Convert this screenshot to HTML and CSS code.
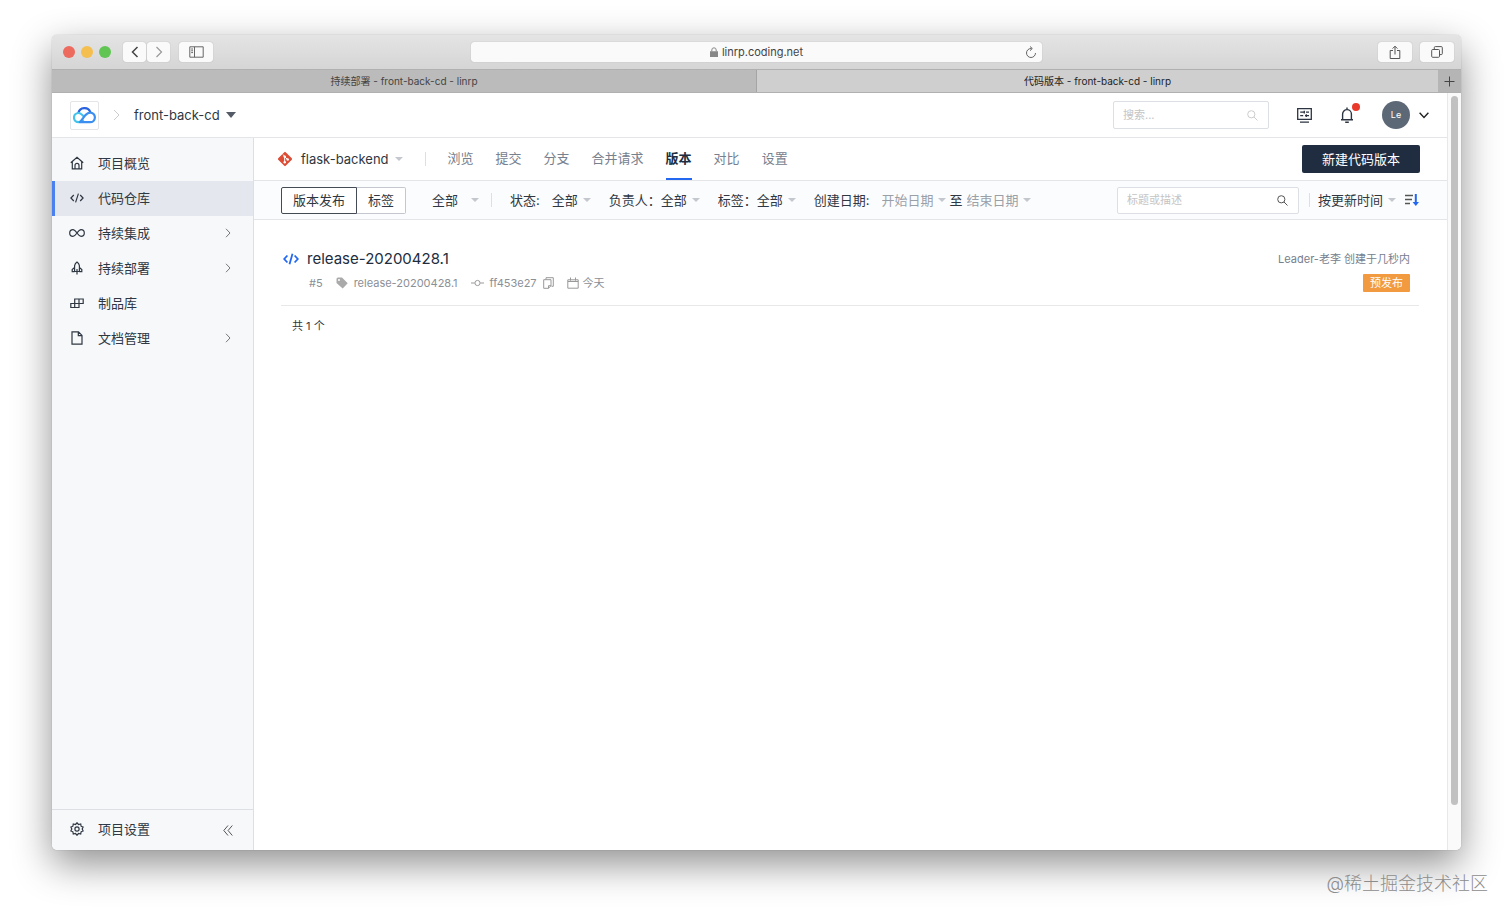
FILE: index.html
```html
<!DOCTYPE html>
<html lang="zh-CN">
  <head>
    <meta charset="UTF-8" />
    <meta name="viewport" content="width=device-width, initial-scale=1.0" />
    <title>代码版本 - front-back-cd - linrp</title>
    <link rel="stylesheet" href="styles.css">
  </head>
  <body>
    <div class="window">
      <div class="toolbar">
        <div class="toolbar-left">
          <div class="lights">
            <span class="red"></span>
            <span class="yellow"></span>
            <span class="green"></span>
          </div>
          <div class="history">
            <button class="tool small" aria-label="后退">
              <svg width="8" height="12" viewBox="0 0 8 12"><path d="M6.5 1 1.5 6l5 5" stroke="#444" stroke-width="1.5" /></svg>
            </button>
            <button class="tool small" aria-label="前进">
              <svg width="8" height="12" viewBox="0 0 8 12"><path d="m1.5 1 5 5-5 5" stroke="#999" stroke-width="1.2" /></svg>
            </button>
          </div>
          <button class="tool" aria-label="边栏">
            <svg width="15" height="12" viewBox="0 0 15 12"><path d="M.8.8h13.4v10.4H.8zM5.5.8v10.4M2.2 3h1.8M2.2 4.8h1.8M2.2 6.6h1.8" stroke="#666" /></svg>
          </button>
        </div>
        <div class="address">
          <svg width="8" height="10" viewBox="0 0 8 10"><path d="M0 4.2h8V10H0z" fill="#888" /><path d="M1.8 4.5V3a2.2 2.2 0 0 1 4.4 0v1.5" stroke="#888" /></svg>
          <span>linrp.coding.net</span>
          <button class="reload" aria-label="重新载入">
            <svg width="12" height="13" viewBox="0 0 12 13"><path d="M6.5 2.5H6a4.500 4.500 0 1 0 4.500 4.500M5 .5l2.300 2L5 4.700" stroke="#666" /></svg>
          </button>
        </div>
        <div class="toolbar-right">
          <button class="tool" aria-label="共享">
            <svg width="12" height="15" viewBox="0 0 12 15"><path d="M4 5.5H1.2v8h9.6v-8H8M6 9.5V1.3M3.6 3.6 6 1.2l2.4 2.4" stroke="#555" /></svg>
          </button>
          <button class="tool" aria-label="所有标签页">
            <svg width="12" height="12" viewBox="0 0 12 12"><rect x=".7" y="3.5" width="7.8" height="7.8" rx="1" stroke="#555" /><path d="M3.3 3.3V1.6q0-1 1-1h6q1 0 1 1v6q0 1-1 1H8.6" stroke="#555" /></svg>
          </button>
        </div>
      </div>

      <div class="tabs">
        <div class="tab">持续部署 - front-back-cd - linrp</div>
        <div class="tab active">
          <span>代码版本 - front-back-cd - linrp</span>
          <button aria-label="新标签页">
            <svg width="11" height="11" viewBox="0 0 11 11"><path d="M5.5.5v10M.5 5.5h10" stroke="#444" /></svg>
          </button>
        </div>
      </div>

      <div class="viewport">
        <div class="page">
          <header>
            <a class="logo" href="#" aria-label="CODING">
              <svg width="23" height="18" viewBox="0 0 23 18">
                <path d="M5.3 7.2A6.3 6.3 0 0 1 17.4 6.4" stroke="#2862e0" stroke-width="2.2" />
                <path d="M11.2 11.2C9 8.3 7.6 7 5.6 7a4.6 4.6 0 0 0 0 9.2c2 0 3.3-1 4.9-2.6" stroke="#43c3ee" stroke-width="2.2" />
                <path d="M7 16.2h10a4.8 4.8 0 0 0 .2-9.6c-2 0-3.2.9-4.800 2.500z" stroke="#3c8ff0" stroke-width="2.2" stroke-linejoin="round" />
              </svg>
            </a>
            <svg class="crumb" width="7" height="12" viewBox="0 0 7 12"><path d="m1 1 5 5-5 5" stroke="#ccc" /></svg>
            <button class="project">front-back-cd <i class="caret dark"></i></button>
            <div class="header-right">
              <label class="search">
                <input type="text" placeholder="搜索..." aria-label="搜索" />
                <svg width="11" height="11" viewBox="0 0 11 11"><circle cx="4.3" cy="4.3" r="3.6" stroke="#ccc" /><path d="m7 7 3.5 3.5" stroke="#ccc" /></svg>
              </label>
              <button class="icon" aria-label="工作台">
                <svg width="15" height="15" viewBox="0 0 15 15"><path d="M.7.7h13.6v10.6H.7zM3 14.2h9M3.2 4.2h4.3M9 4.2h3M3.2 7.6h3M8 7.6h4M7.3 2.8v2.8M9.3 6.2v2.9" stroke="#2b3440" stroke-width="1.3" /></svg>
              </button>
              <button class="icon bell" aria-label="通知">
                <svg width="14" height="16" viewBox="0 0 14 16"><path d="M1 12.8h12M2.6 12.6V7a4.4 4.4 0 0 1 8.8 0v5.6M7 2.4V.6M5.2 15.2h3.6" stroke="#2b3440" stroke-width="1.4" /></svg>
              </button>
              <button class="account">
                <span class="avatar">Le</span>
                <svg width="10" height="7" viewBox="0 0 10 7"><path d="m.6.8 4.4 4.6L9.4.8" stroke="#222" stroke-width="1.4" /></svg>
              </button>
            </div>
          </header>

          <div class="body">
            <aside>
              <nav class="menu">
                <a href="#">
                  <svg width="14" height="14" viewBox="0 0 14 14"><path d="M.8 6.8 7 1.3l6.2 5.5M2.3 5.8v7h9.4v-7M5 12.8V9.4a2 2 0 0 1 4 0v3.4" /></svg>
                  项目概览
                </a>
                <a href="#" class="active">
                  <svg width="14" height="14" viewBox="0 0 14 14"><path d="M3.8 4 .9 7l2.9 3M10.2 4l2.9 3-2.9 3M8.4 2.6 5.6 11.4" /></svg>
                  代码仓库
                </a>
                <a href="#">
                  <svg width="16" height="14" viewBox="0 0 16 14"><path d="M8 7C6.500 5 5.500 3.700 4 3.700a3.300 3.300 0 0 0 0 6.600c1.500 0 2.500-1.300 4-3.300s2.500-3.300 4-3.300a3.300 3.300 0 0 1 0 6.600c-1.500 0-2.500-1.300-4-3.300z" /></svg>
                  持续集成
                  <svg class="more" width="6" height="10" viewBox="0 0 6 10"><path d="m1 .8 4 4.200-4 4.200" /></svg>
                </a>
                <a href="#">
                  <svg width="14" height="14" viewBox="0 0 14 14"><path d="M4.600 10.500V4.600Q5 2.300 7 1q2 1.300 2.400 3.600v5.900zM4.600 6.500 2.200 8.600v2h2.400M9.400 6.500l2.400 2.100v2H9.400M7 8v5.400" /></svg>
                  持续部署
                  <svg class="more" width="6" height="10" viewBox="0 0 6 10"><path d="m1 .8 4 4.200-4 4.200" /></svg>
                </a>
                <a href="#">
                  <svg width="14" height="14" viewBox="0 0 14 14"><path d="M4.700 3h8.500v4.500H4.700zM9 3v8.500M.8 7.500H9v4H.8zM4.700 7.500v4" /></svg>
                  制品库
                </a>
                <a href="#">
                  <svg width="14" height="14" viewBox="0 0 14 14"><path d="M2 .9h6.500L12 4.400v8.700H2zM8.300.9v3.700H12" /></svg>
                  文档管理
                  <svg class="more" width="6" height="10" viewBox="0 0 6 10"><path d="m1 .8 4 4.200-4 4.200" /></svg>
                </a>
              </nav>
              <div class="settings">
                <a href="#">
                  <svg width="14" height="14" viewBox="0 0 14 14"><path d="m5.500 2.500 1.500-1.700 1.500 1.700 2.200-.5.4 2.200 2 .9L12.200 7l.9 1.900-2 .9-.4 2.200-2.200-.5L7 13.200l-1.500-1.700-2.200.5-.4-2.200-2-.9L1.800 7l-.9-1.900 2-.9.4-2.200z" /><circle cx="7" cy="7" r="2.100" /></svg>
                  项目设置
                </a>
                <button aria-label="收起">
                  <svg width="10" height="11" viewBox="0 0 10 11"><path d="M5 .5.800 5.500l4.200 5M9.300.5 5.100 5.500l4.200 5" stroke="#555" /></svg>
                </button>
              </div>
            </aside>

            <main>
              <div class="repo-bar">
                <svg width="16" height="16" viewBox="0 0 16 16"><rect x="2.700" y="2.700" width="10.600" height="10.600" rx="1" transform="rotate(45 8 8)" fill="#dd4c35" /><path d="M6 3.500 7.700 5.500v6M7.700 5.800l3 2.700" stroke="#fff" stroke-width="1" /><circle cx="7.700" cy="11.300" r="1.200" fill="#fff" /><circle cx="10.700" cy="8.500" r="1.200" fill="#fff" /><circle cx="7.700" cy="5.600" r="1.200" fill="#fff" /></svg>
                <button class="repo">flask-backend <i class="caret"></i></button>
                <span class="divider"></span>
                <nav>
                  <a href="#">浏览</a>
                  <a href="#">提交</a>
                  <a href="#">分支</a>
                  <a href="#">合并请求</a>
                  <a href="#" class="active">版本</a>
                  <a href="#">对比</a>
                  <a href="#">设置</a>
                </nav>
                <button class="primary">新建代码版本</button>
              </div>

              <div class="filters">
                <div class="segment">
                  <button class="active">版本发布</button>
                  <button>标签</button>
                </div>
                <div class="drop wide">
                  <select aria-label="范围"><option>全部</option></select>
                  <i class="caret"></i>
                </div>
                <span class="divider"></span>
                <div class="drop">
                  <label for="state" class="spaced">状态:</label>
                  <select id="state"><option>全部</option></select>
                  <i class="caret"></i>
                </div>
                <div class="drop">
                  <label for="owner">负责人：</label>
                  <select id="owner"><option>全部</option></select>
                  <i class="caret"></i>
                </div>
                <div class="drop">
                  <label for="tag">标签：</label>
                  <select id="tag"><option>全部</option></select>
                  <i class="caret"></i>
                </div>
                <div class="drop">
                  <label for="start" class="spaced">创建日期:</label>
                  <input id="start" type="text" placeholder="开始日期" />
                  <i class="caret"></i>
                  <label for="end" class="to">至</label>
                  <input id="end" type="text" placeholder="结束日期" />
                  <i class="caret"></i>
                </div>
                <div class="filters-right">
                  <label class="search">
                    <input type="text" placeholder="标题或描述" aria-label="标题或描述" />
                    <svg width="11" height="11" viewBox="0 0 11 11"><circle cx="4.300" cy="4.300" r="3.600" stroke="#555" /><path d="m7 7 3.500 3.500" stroke="#555" /></svg>
                  </label>
                  <span class="divider"></span>
                  <div class="drop">
                    <select aria-label="排序"><option>按更新时间</option></select>
                    <i class="caret"></i>
                  </div>
                  <button class="sort" aria-label="降序">
                    <svg width="16" height="14" viewBox="0 0 16 14"><path d="M1 2.500h8M1 6.500h7M1 10.500h5" stroke="#555" stroke-width="1.300" /><path d="M11.800 1v10" stroke="#2468f2" stroke-width="2" /><path d="M8.600 9h6.400l-3.200 4z" fill="#2468f2" /></svg>
                  </button>
                </div>
              </div>

              <div class="releases">
                <article>
                  <svg class="code" width="16" height="14" viewBox="0 0 16 14"><path d="M4.400 3.500 1.200 7l3.200 3.500M11.600 3.500 14.800 7l-3.200 3.500M9.500 1.800 6.500 12.200" stroke="#2468f2" stroke-width="1.800" /></svg>
                  <div class="info">
                    <h3><a href="#">release-20200428.1</a></h3>
                    <div class="meta">
                      <span>#5</span>
                      <span class="ref">
                        <svg width="12" height="12" viewBox="0 0 12 12"><path fill-rule="evenodd" d="M.5 2q0-1.500 1.500-1.500h4L11.700 6.200 6.700 11.500.500 6zM3 2a1 1 0 1 0 0 2 1 1 0 0 0 0-2z" fill="#aaa" /></svg>
                        release-20200428.1
                      </span>
                      <span class="ref">
                        <svg width="13" height="8" viewBox="0 0 13 8"><circle cx="6.500" cy="4" r="2.600" stroke="#999" /><path d="M0 4h3.700M9.300 4H13" stroke="#999" /></svg>
                        ff453e27
                        <button aria-label="复制">
                          <svg width="11" height="12" viewBox="0 0 11 12"><path d="M3 2.500V.7h7.300v8.600H8.500M.7 2.700H8v6L5.500 11.300H.7zM8 8.700H5.500v2.600" stroke="#999" /></svg>
                        </button>
                      </span>
                      <span class="ref date">
                        <svg width="12" height="12" viewBox="0 0 12 12"><path d="M.8 2.800h10.400v8.400H.8zM3.500.5v3.200M8.500.5v3.200M.8 4.500h10.400" stroke="#999" /></svg>
                        今天
                      </span>
                    </div>
                  </div>
                  <div class="state">
                    <span>Leader-老李 创建于几秒内</span>
                    <span class="badge">预发布</span>
                  </div>
                </article>
                <p class="total">共 1 个</p>
              </div>
            </main>
          </div>
        </div>
        <div class="scrollbar"></div>
      </div>
    </div>
    <div class="watermark">@稀土掘金技术社区</div>
  </body>
</html>
```
FILE: styles.css
```css
:root {
  --text: #2f3742;
  --muted: #76808e;
  --line: #e3e5e8;
  --blue: #2468f2;
}
* {
  box-sizing: border-box;
}
body {
  margin: 0;
  min-height: 100vh;
  padding: 35px 51px 68px 52px;
  display: flex;
  position: relative;
  background: #fff;
  color: var(--text);
  font: 13px/20px Inter, "Noto Sans CJK SC", sans-serif;
}
svg {
  display: block;
  fill: none;
  flex: none;
}
a {
  color: inherit;
  text-decoration: none;
}
button, input, select {
  font: inherit;
  color: inherit;
  border: 0;
  padding: 0;
  margin: 0;
  background: none;
  outline: none;
  appearance: none;
}
input::placeholder {
  color: #c4c4c4;
  opacity: 1;
}

.window {
  flex: 1;
  min-width: 0;
  display: flex;
  flex-direction: column;
  border-radius: 5px;
  overflow: hidden;
  background: #fff;
  box-shadow: 0 0 1px rgba(0, 0, 0, 0.4), 0 14px 38px rgba(0, 0, 0, 0.44);
}

/* browser */
.toolbar {
  height: 34px;
  padding: 0 7px;
  display: grid;
  grid-template-columns: 1fr minmax(0, 571px) 1fr;
  align-items: center;
  background: linear-gradient(#e4e4e4, #d5d5d5);
}
.toolbar-left, .toolbar-right, .lights, .history {
  display: flex;
  align-items: center;
}
.toolbar-left {
  gap: 9px;
}
.toolbar-right {
  justify-content: flex-end;
  gap: 8px;
}
.lights {
  gap: 6px;
  margin: 0 3px 0 4px;
  span {
    width: 12px;
    height: 12px;
    border-radius: 50%;
  }
  .red { background: #ec6a5e; }
  .yellow { background: #f4bf4f; }
  .green { background: #61c554; }
}
.history {
  gap: 1px;
}
.tool {
  width: 34px;
  height: 20px;
  display: grid;
  place-content: center;
  border-radius: 3px;
  background: #fafafa;
  box-shadow: 0 0 1px rgba(0, 0, 0, 0.3);
}
.tool.small {
  width: 23px;
}
.address {
  height: 20px;
  position: relative;
  display: flex;
  justify-content: center;
  align-items: center;
  gap: 4px;
  border-radius: 3px;
  background: #fafafa;
  color: #444;
  font-size: 11px;
  box-shadow: 0 0 1px rgba(0, 0, 0, 0.3);
}
.reload {
  position: absolute;
  right: 5px;
}
.tabs {
  height: 24px;
  display: flex;
  border-top: 1px solid #b0b0b0;
  border-bottom: 1px solid #b0b0b0;
  font-size: 10px;
}
.tab {
  flex: 1;
  display: flex;
  justify-content: center;
  align-items: center;
  background: #bbb;
  color: #444;
}
.tab.active {
  border-left: 1px solid #a5a5a5;
  background: #cfcfcf;
  color: #222;
  span {
    flex: 1;
    text-align: center;
  }
  button {
    width: 23px;
    align-self: stretch;
    display: grid;
    place-content: center;
    background: #b5b5b5;
  }
}
.viewport {
  flex: 1;
  display: flex;
}
.page {
  flex: 1;
  min-width: 0;
  display: flex;
  flex-direction: column;
}
.scrollbar {
  width: 14px;
  padding: 3px 3px 45px;
  background: #fafafa;
  border-left: 1px solid #e8e8e8;
  display: flex;
}
.scrollbar::before {
  content: "";
  width: 7px;
  border-radius: 4px;
  background: #c1c1c1;
}

/* header */
header {
  height: 45px;
  padding: 0 18px;
  display: flex;
  align-items: center;
  border-bottom: 1px solid var(--line);
}
.logo {
  width: 29px;
  height: 29px;
  display: grid;
  place-content: center;
  border: 1px solid var(--line);
  border-radius: 2px;
}
.crumb {
  margin: 0 14px;
}
.project, .repo {
  display: flex;
  align-items: center;
  gap: 6px;
}
.caret {
  flex: none;
  border: 4px solid transparent;
  border-top-color: #c4c8ce;
  border-bottom: 0;
}
.caret.dark {
  border-width: 6px 5px 0;
  border-top-color: #555b66;
}
.header-right {
  margin-left: auto;
  display: flex;
  align-items: center;
  gap: 28px;
}
.search {
  width: 156px;
  height: 28px;
  padding: 0 10px 0 9px;
  display: flex;
  align-items: center;
  border: 1px solid #dcdfe3;
  border-radius: 2px;
  background: #fff;
  font-size: 11px;
  input {
    flex: 1;
    min-width: 0;
  }
}
.bell {
  position: relative;
}
.bell::after {
  content: "";
  position: absolute;
  top: -4px;
  right: -6px;
  width: 8px;
  height: 8px;
  border-radius: 50%;
  background: #e8392b;
}
.account {
  display: flex;
  align-items: center;
  gap: 9px;
}
.avatar {
  width: 28px;
  height: 28px;
  border-radius: 50%;
  background: #5d6876;
  color: #fff;
  font-size: 9px;
  line-height: 28px;
}

/* sidebar */
.body {
  flex: 1;
  display: flex;
}
aside {
  width: 202px;
  flex: none;
  display: flex;
  flex-direction: column;
  border-right: 1px solid #dcdfe4;
  background: #f6f8fa;
  a {
    display: flex;
    align-items: center;
    padding-bottom: 2px;
  }
  a > svg {
    stroke: var(--text);
    stroke-width: 1.2;
  }
  a > svg:first-child {
    width: 16px;
    margin-right: 13px;
  }
}
.menu {
  flex: 1;
  padding-top: 8px;
  a {
    height: 35px;
    padding: 0 22px 2px 14px;
    border-left: 3px solid transparent;
  }
  a.active {
    border-color: #4a80f0;
    background: #e4e8ee;
  }
  a > .more {
    margin-left: auto;
    stroke: #777;
    stroke-width: 1;
  }
}
.settings {
  height: 41px;
  padding: 0 20px 0 17px;
  display: flex;
  justify-content: space-between;
  align-items: center;
  border-top: 1px solid #dcdfe4;
}

/* content */
main {
  flex: 1;
  min-width: 0;
}
.divider {
  width: 1px;
  height: 14px;
  background: #dcdfe3;
}
.repo-bar {
  height: 43px;
  padding: 0 27px 0 23px;
  display: flex;
  align-items: center;
  border-bottom: 1px solid var(--line);
  .divider {
    margin: 0 22px;
  }
  nav {
    align-self: stretch;
    display: flex;
    gap: 22px;
    color: var(--muted);
  }
  nav a {
    line-height: 40px;
    border-bottom: 2px solid transparent;
  }
  nav a.active {
    color: #202d40;
    font-weight: 700;
    border-color: var(--blue);
  }
}
.repo {
  margin-left: 8px;
}
.primary {
  width: 118px;
  height: 28px;
  margin-left: auto;
  border-radius: 2px;
  background: #202d40;
  color: #fff;
}
.filters {
  height: 39px;
  padding: 0 27px;
  display: flex;
  align-items: center;
  white-space: nowrap;
  border-bottom: 1px solid var(--line);
  background: #fbfcfd;
  > .divider {
    margin-left: 12px;
  }
  select {
    height: 20px;
  }
}
.segment {
  display: flex;
  button {
    height: 27px;
    padding: 0 11px;
    border: 1px solid #c4c8ce;
    border-left: 0;
    border-radius: 0 2px 2px 0;
    background: #fff;
  }
  button.active {
    border: 1px solid #444b55;
    border-radius: 2px 0 0 2px;
  }
}
.drop {
  margin-left: 18px;
  display: flex;
  align-items: center;
  .spaced {
    margin-right: 12px;
  }
  .caret {
    margin-left: 4px;
  }
  .to {
    margin: 0 4px;
  }
  input {
    width: 52px;
  }
  input::placeholder {
    color: #9aa0a8;
  }
}
.drop.wide {
  margin-left: 26px;
  .caret {
    margin-left: 12px;
  }
}
.filters-right {
  margin-left: auto;
  display: flex;
  align-items: center;
  .search {
    width: 182px;
    height: 27px;
  }
  .divider {
    margin-left: 10px;
  }
  .drop {
    margin: 0 8px;
  }
}
.releases {
  padding: 27px 28px 0 27px;
}
article {
  padding: 0 9px 10px 2px;
  display: flex;
  border-bottom: 1px solid #e8e8e8;
}
.code {
  margin: 5px 8px 0 0;
}
h3 {
  margin: 0;
  color: #202d40;
  font-size: 15px;
  font-weight: 400;
  line-height: 24px;
}
.meta {
  display: flex;
  gap: 13px;
  padding-left: 2px;
  color: #8b8f96;
  font-size: 11px;
  line-height: 24px;
}
.ref {
  display: flex;
  align-items: center;
  gap: 6px;
}
.date {
  gap: 4px;
}
.state {
  margin-left: auto;
  display: flex;
  flex-direction: column;
  align-items: flex-end;
  gap: 3px;
  color: var(--muted);
  font-size: 11px;
  line-height: 24px;
}
.badge {
  padding: 0 7px;
  border-radius: 1px;
  background: #f29a3f;
  color: #fff;
  line-height: 18px;
}
.total {
  margin: 10px 11px;
  font-size: 11px;
}
.watermark {
  position: absolute;
  right: 24px;
  bottom: 22px;
  color: #8c8c8c;
  font-size: 18px;
  line-height: 24px;
  font-weight: 300;
}
```
